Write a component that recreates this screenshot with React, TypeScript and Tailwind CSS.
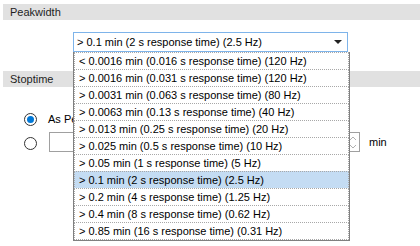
import React from 'react';

const options = [
  '< 0.0016 min (0.016 s response time) (120 Hz)',
  '> 0.0016 min (0.031 s response time) (120 Hz)',
  '> 0.0031 min (0.063 s response time) (80 Hz)',
  '> 0.0063 min (0.13 s response time) (40 Hz)',
  '> 0.013 min (0.25 s response time) (20 Hz)',
  '> 0.025 min (0.5 s response time) (10 Hz)',
  '> 0.05 min (1 s response time) (5 Hz)',
  '> 0.1 min (2 s response time) (2.5 Hz)',
  '> 0.2 min (4 s response time) (1.25 Hz)',
  '> 0.4 min (8 s response time) (0.62 Hz)',
  '> 0.85 min (16 s response time) (0.31 Hz)',
];

const selected = 7;

const Radio = ({ checked, className = '' }: { checked?: boolean; className?: string }) => (
  <div className={`w-[13px] h-[13px] shrink-0 rounded-full border border-[#333] bg-white flex items-center justify-center ${className}`}>
    {checked && <div className="w-[7px] h-[7px] rounded-full bg-[#0078d7]" />}
  </div>
);

const SectionHeader = ({ title }: { title: string }) => (
  <div className="ml-[3px] h-4 bg-[#e1e1e1] pl-[7px] leading-4 text-[#1e1e1e]">{title}</div>
);

export default function App() {
  return (
    <div className="relative w-[420px] h-[246px] bg-white overflow-hidden font-['Liberation_Sans',Arial,sans-serif] text-[11px] text-black">
      <div className="pt-1">
        <SectionHeader title="Peakwidth" />

        {/* combobox */}
        <div className="ml-[73px] mt-3 w-[275px] h-5 border border-[#7eb4ea] flex items-center justify-between pl-[3px] pr-[5px]">
          <span>{options[selected]}</span>
          <svg width="8" height="4" viewBox="0 0 8 4">
            <path d="M0 0h8L4 4z" fill="#222" />
          </svg>
        </div>

        <div className="mt-[19px]">
          <SectionHeader title="Stoptime" />
        </div>

        <div className="pl-6 pt-[26px] flex flex-col">
          <div className="flex items-center gap-[11px] h-[13px]">
            <Radio checked />
            <span className="whitespace-nowrap">As Peakwidth</span>
          </div>
          <div className="flex items-start gap-[12px] mt-[6px]">
            <Radio className="mt-[5px]" />
            <div className="w-[311px] h-5 border border-[#a0a0a0] flex justify-end items-center pr-[3px]">
              <div className="flex flex-col gap-[5px]">
                <svg width="6" height="4" viewBox="0 0 6 4"><path d="M0 4 3 1 6 4" fill="none" stroke="#b0b0b0" /></svg>
                <svg width="6" height="4" viewBox="0 0 6 4"><path d="M0 0 3 3 6 0" fill="none" stroke="#b0b0b0" /></svg>
              </div>
            </div>
            <span className="ml-[-3px] leading-5">min</span>
          </div>
        </div>
      </div>

      {/* dropdown list, open over the form */}
      <div className="absolute left-[73px] top-[52px] w-[277px] bg-white border-x border-b border-[#808080]">
        {options.map((o, i) => (
          <div
            key={o}
            className={`h-[18px] leading-[16px] pl-1 border border-dotted border-[#a8a8a8] -mt-px first:mt-0 ${i === selected ? 'bg-[#c4dcf3]' : 'bg-white'}`}
          >
            {o}
          </div>
        ))}
      </div>
    </div>
  );
}
